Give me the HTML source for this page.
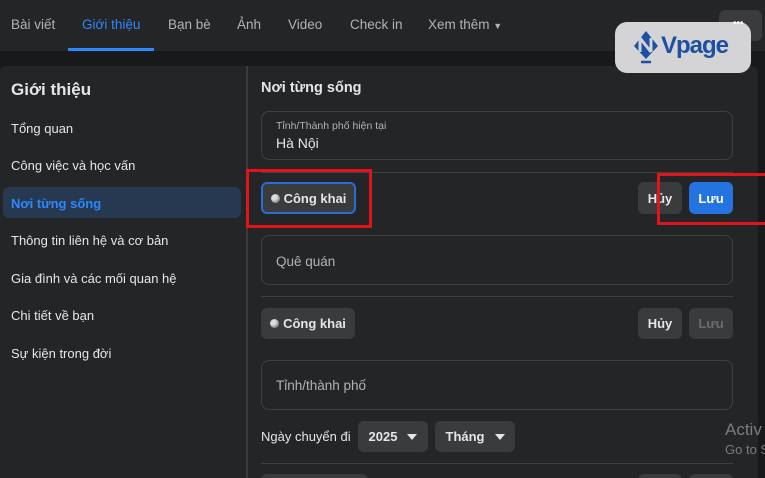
<!DOCTYPE html>
<html><head><meta charset="utf-8"><style>
*{box-sizing:border-box;margin:0;padding:0}
html,body{width:765px;height:478px;overflow:hidden}
body{background:#18191a;font-family:"Liberation Sans",sans-serif;color:#e4e6eb;position:relative}
.a{position:absolute;white-space:nowrap}
.nav{left:0;top:0;width:765px;height:51px;background:#242526}
.nav span{position:absolute;top:17px;font-size:13.5px;color:#b0b3b8}
.card{left:0;top:66px;width:758px;height:420px;background:#242526;border-radius:6px}
.side{font-size:13px;color:#e4e6eb}
.box{border:1px solid #3e4042;border-radius:8px;background:#242526}
.btn{background:#3a3b3c;border-radius:6px;font-size:13px;font-weight:bold;color:#e4e6eb;display:flex;align-items:center;justify-content:center}
.hr{height:1px;background:#3e4042}
.red{border:3px solid #e0141a}
.g{display:inline-block;width:9px;height:9px;border-radius:50%;background:radial-gradient(circle at 35% 35%,#ddd 30%,#888 70%);margin-right:4px}
.tri{display:inline-block;border-left:5px solid transparent;border-right:5px solid transparent;border-top:6px solid #e4e6eb;margin-left:10px}
</style></head><body>
<div class="a nav">
<span style="left:11px">Bài viết</span>
<span style="left:82px;color:#2d88ff">Giới thiệu</span>
<div class="a" style="left:68px;top:48px;width:86px;height:3px;background:#2d88ff"></div>
<span style="left:168px">Bạn bè</span>
<span style="left:237px">Ảnh</span>
<span style="left:288px">Video</span>
<span style="left:350px">Check in</span>
<span style="left:428px">Xem thêm <span style="position:static;font-size:9px">▼</span></span>
<div class="a" style="left:719px;top:10px;width:43px;height:31px;background:#3a3b3c;border-radius:6px"></div>
</div>
<div class="a card"></div>
<div class="a" style="left:246px;top:66px;width:2px;height:412px;background:#3a3b3c"></div>
<div class="a" style="left:11px;top:80px;font-size:17px;font-weight:bold">Giới thiệu</div>
<div class="a" style="left:3px;top:187px;width:238px;height:31px;background:#263951;border-radius:6px"></div>
<div class="a side" style="left:11px;top:121px">Tổng quan</div>
<div class="a side" style="left:11px;top:158px">Công việc và học vấn</div>
<div class="a side" style="left:11px;top:196px;color:#2d88ff;font-weight:bold">Nơi từng sống</div>
<div class="a side" style="left:11px;top:233px">Thông tin liên hệ và cơ bản</div>
<div class="a side" style="left:11px;top:271px">Gia đình và các mối quan hệ</div>
<div class="a side" style="left:11px;top:308px">Chi tiết về bạn</div>
<div class="a side" style="left:11px;top:346px">Sự kiện trong đời</div>

<div class="a" style="left:261px;top:80px;font-size:14.5px;font-weight:bold">Nơi từng sống</div>
<div class="a box" style="left:261px;top:111px;width:472px;height:49px"></div>
<div class="a" style="left:276px;top:120px;font-size:10.5px;color:#b0b3b8">Tỉnh/Thành phố hiện tại</div>
<div class="a" style="left:276px;top:135px;font-size:14px">Hà Nội</div>
<div class="a hr" style="left:261px;top:172px;width:472px"></div>
<div class="a btn" style="left:261px;top:182px;width:95px;height:32px;border:2px solid #2d6bd6"><span class="g"></span>Công khai</div>
<div class="a btn" style="left:638px;top:182px;width:44px;height:32px">Hủy</div>
<div class="a btn" style="left:689px;top:182px;width:44px;height:32px;background:#2374e1;color:#fff">Lưu</div>
<div class="a red" style="left:246px;top:169px;width:126px;height:59px"></div>
<div class="a red" style="left:657px;top:173px;width:112px;height:52px"></div>
<div class="a box" style="left:261px;top:235px;width:472px;height:50px"></div>
<div class="a" style="left:276px;top:254px;font-size:13.5px;color:#b0b3b8">Quê quán</div>
<div class="a hr" style="left:261px;top:296px;width:472px"></div>
<div class="a btn" style="left:261px;top:308px;width:94px;height:31px"><span class="g"></span>Công khai</div>
<div class="a btn" style="left:638px;top:308px;width:44px;height:31px">Hủy</div>
<div class="a btn" style="left:689px;top:308px;width:44px;height:31px;color:#6a6d70">Lưu</div>
<div class="a box" style="left:261px;top:360px;width:472px;height:50px"></div>
<div class="a" style="left:276px;top:378px;font-size:13.5px;color:#b0b3b8">Tỉnh/thành phố</div>
<div class="a" style="left:261px;top:429px;font-size:13px">Ngày chuyển đi</div>
<div class="a btn" style="left:358px;top:421px;width:70px;height:31px">2025<span class="tri"></span></div>
<div class="a btn" style="left:435px;top:421px;width:80px;height:31px">Tháng<span class="tri"></span></div>
<div class="a hr" style="left:261px;top:463px;width:472px"></div>
<div class="a btn" style="left:261px;top:474px;width:107px;height:20px"></div>
<div class="a btn" style="left:638px;top:474px;width:44px;height:20px"></div>
<div class="a btn" style="left:689px;top:474px;width:44px;height:20px"></div>
<div class="a" style="left:725px;top:420px;font-size:17px;color:#7a7c80">Activ</div>
<div class="a" style="left:725px;top:442px;font-size:13px;color:#7a7c80">Go to S</div>

<div class="a" style="left:615px;top:22px;width:136px;height:51px;background:#d4d4d6;border-radius:12px"></div>
<svg class="a" style="left:631px;top:30px" width="30" height="36" viewBox="0 0 30 36"><path d="M15 1 L27 16 L15 29 L3 16 Z" fill="#1e4fa3"/><path d="M9 8 L9 22 M9 8 L20 22 M20 8 L20 22" stroke="#d4d4d6" stroke-width="3" fill="none"/><path d="M10 32 L20 32" stroke="#1e4fa3" stroke-width="2.5"/></svg>
<div class="a" style="left:661px;top:32px;font-size:24px;font-weight:bold;color:#1e4fa3;letter-spacing:-1px">Vpage</div>
<div class="a" style="left:733px;top:18px;font-size:10px;color:#fff">•••</div>
</body></html>
